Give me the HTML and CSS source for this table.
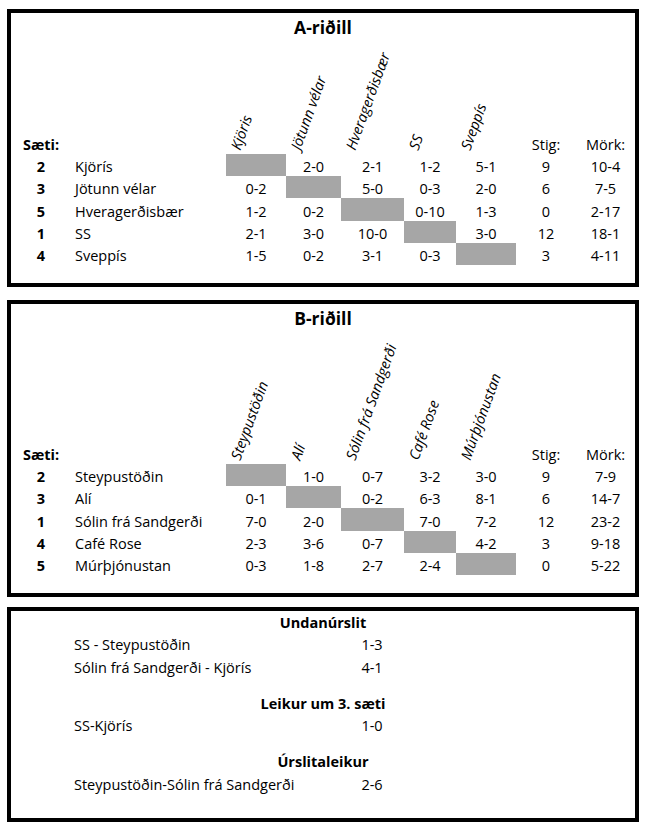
FILE: index.html
```html
<!DOCTYPE html>
<html lang="is">
<head>
<meta charset="utf-8">
<title>Riðlar og úrslit</title>
<link rel="stylesheet" href="styles.css">
</head>
<body>
<div class="page">

  <section class="box group group-a">
    <h2 class="title">A-riðill</h2>
    <div class="table">
      <div class="hdr rank">Sæti:</div>
      <div class="hdr"></div>
      <div class="hdr rot-cell"><span class="rot">Kjöris</span></div>
      <div class="hdr rot-cell"><span class="rot">Jötunn vélar</span></div>
      <div class="hdr rot-cell"><span class="rot">Hveragerðisbær</span></div>
      <div class="hdr rot-cell"><span class="rot">SS</span></div>
      <div class="hdr rot-cell"><span class="rot">Sveppís</span></div>
      <div class="hdr">Stig:</div>
      <div class="hdr">Mörk:</div>

      <div class="c rank">2</div><div class="c name">Kjörís</div>
      <div class="c gray"></div><div class="c">2-0</div><div class="c">2-1</div><div class="c">1-2</div><div class="c">5-1</div>
      <div class="c">9</div><div class="c">10-4</div>

      <div class="c rank">3</div><div class="c name">Jötunn vélar</div>
      <div class="c">0-2</div><div class="c gray"></div><div class="c">5-0</div><div class="c">0-3</div><div class="c">2-0</div>
      <div class="c">6</div><div class="c">7-5</div>

      <div class="c rank">5</div><div class="c name">Hveragerðisbær</div>
      <div class="c">1-2</div><div class="c">0-2</div><div class="c gray"></div><div class="c">0-10</div><div class="c">1-3</div>
      <div class="c">0</div><div class="c">2-17</div>

      <div class="c rank">1</div><div class="c name">SS</div>
      <div class="c">2-1</div><div class="c">3-0</div><div class="c">10-0</div><div class="c gray"></div><div class="c">3-0</div>
      <div class="c">12</div><div class="c">18-1</div>

      <div class="c rank">4</div><div class="c name">Sveppís</div>
      <div class="c">1-5</div><div class="c">0-2</div><div class="c">3-1</div><div class="c">0-3</div><div class="c gray"></div>
      <div class="c">3</div><div class="c">4-11</div>
    </div>
  </section>

  <section class="box group group-b">
    <h2 class="title">B-riðill</h2>
    <div class="table">
      <div class="hdr rank">Sæti:</div>
      <div class="hdr"></div>
      <div class="hdr rot-cell"><span class="rot">Steypustöðin</span></div>
      <div class="hdr rot-cell"><span class="rot">Alí</span></div>
      <div class="hdr rot-cell"><span class="rot">Sólin frá Sandgerði</span></div>
      <div class="hdr rot-cell"><span class="rot">Café Rose</span></div>
      <div class="hdr rot-cell"><span class="rot">Múrþjónustan</span></div>
      <div class="hdr">Stig:</div>
      <div class="hdr">Mörk:</div>

      <div class="c rank">2</div><div class="c name">Steypustöðin</div>
      <div class="c gray"></div><div class="c">1-0</div><div class="c">0-7</div><div class="c">3-2</div><div class="c">3-0</div>
      <div class="c">9</div><div class="c">7-9</div>

      <div class="c rank">3</div><div class="c name">Alí</div>
      <div class="c">0-1</div><div class="c gray"></div><div class="c">0-2</div><div class="c">6-3</div><div class="c">8-1</div>
      <div class="c">6</div><div class="c">14-7</div>

      <div class="c rank">1</div><div class="c name">Sólin frá Sandgerði</div>
      <div class="c">7-0</div><div class="c">2-0</div><div class="c gray"></div><div class="c">7-0</div><div class="c">7-2</div>
      <div class="c">12</div><div class="c">23-2</div>

      <div class="c rank">4</div><div class="c name">Café Rose</div>
      <div class="c">2-3</div><div class="c">3-6</div><div class="c">0-7</div><div class="c gray"></div><div class="c">4-2</div>
      <div class="c">3</div><div class="c">9-18</div>

      <div class="c rank">5</div><div class="c name">Múrþjónustan</div>
      <div class="c">0-3</div><div class="c">1-8</div><div class="c">2-7</div><div class="c">2-4</div><div class="c gray"></div>
      <div class="c">0</div><div class="c">5-22</div>
    </div>
  </section>

  <section class="box finals">
    <div class="fgroup">
      <h3 class="fhead">Undanúrslit</h3>
      <div class="frow"><span class="fname">SS - Steypustöðin</span><span class="fscore">1-3</span></div>
      <div class="frow"><span class="fname">Sólin frá Sandgerði - Kjörís</span><span class="fscore">4-1</span></div>
    </div>
    <div class="fgroup">
      <h3 class="fhead">Leikur um 3. sæti</h3>
      <div class="frow"><span class="fname">SS-Kjörís</span><span class="fscore">1-0</span></div>
    </div>
    <div class="fgroup">
      <h3 class="fhead">Úrslitaleikur</h3>
      <div class="frow"><span class="fname">Steypustöðin-Sólin frá Sandgerði</span><span class="fscore">2-6</span></div>
    </div>
  </section>

</div>
</body>
</html>
```

FILE: styles.css
```css
html, body {
  margin: 0;
  padding: 0;
  background: #ffffff;
}

body {
  font-family: "Open Sans", "Noto Sans", sans-serif;
  font-size: 14.5px;
  color: #000000;
}

.page {
  padding: 9px 0 0 7px;
}

.box {
  box-sizing: border-box;
  width: 632px;
  border: 4px solid #000000;
  background: #ffffff;
}

.group {
  padding: 2px 0 18px;
}

.group-a {
  margin-bottom: 13px;
}

.group-b {
  margin-bottom: 10px;
}

.title {
  margin: 0;
  font-size: 17.5px;
  font-weight: 700;
  line-height: 24px;
  text-align: center;
}

.table {
  display: grid;
  grid-template-columns: 60px 155px 60px 55px 63px 52px 60px 60px 59px;
}

.group-a .table {
  grid-template-rows: 115px repeat(5, 22.2px);
}

.group-b .table {
  grid-template-rows: 134px repeat(5, 22.2px);
}

.hdr,
.c {
  display: flex;
  align-items: flex-end;
  justify-content: center;
  line-height: 18px;
  white-space: nowrap;
}

.rank {
  font-weight: 700;
}

.name {
  justify-content: flex-start;
  padding-left: 4px;
}

.gray {
  background: #a6a6a6;
}

.rot-cell {
  justify-content: flex-start;
  padding-left: 17px;
  padding-bottom: 2px;
}

.rot {
  display: block;
  line-height: 16px;
  font-style: italic;
  white-space: nowrap;
  transform-origin: 0 100%;
  transform: rotate(-70deg);
}

/* Finals */
.finals {
  padding: 1px 0 22px;
}

.fgroup + .fgroup {
  margin-top: 13.5px;
}

.fhead {
  margin: 0;
  font-size: 14.5px;
  font-weight: 700;
  line-height: 22.5px;
  text-align: center;
}

.frow {
  display: grid;
  grid-template-columns: 270px 56px;
  padding-left: 63px;
  line-height: 22.5px;
}

.fname {
  white-space: nowrap;
}

.fscore {
  text-align: center;
}
```
